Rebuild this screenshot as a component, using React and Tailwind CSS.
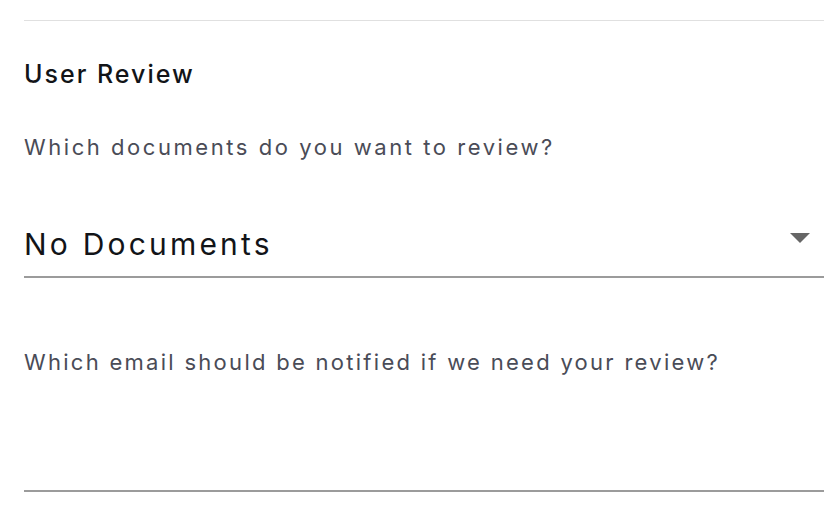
import { useState } from 'react';

export default function App() {
  const [docs] = useState('No Documents');
  const [email, setEmail] = useState('');

  return (
    <div className="w-[840px] h-[508px] bg-white px-6 overflow-hidden" style={{ fontFamily: 'Inter, "Noto Sans", sans-serif' }}>
      <div className="w-[800px]">
        <div className="h-[21px] border-b border-[#e0e0e0]" />

        <h2 className="mt-[38px] text-[25px] leading-[30px] font-medium text-[#121418] tracking-[2px]">User Review</h2>

        <p className="mt-[44px] text-[22px] leading-[28px] text-[#4a4c57] tracking-[2.55px]">
          Which documents do you want to review?
        </p>

        <div className="mt-[65px] flex justify-between border-b-2 border-[#9b9b9b] h-[52px]">
          <span className="text-[30px] leading-[36px] text-[#121418] tracking-[3.2px]">{docs}</span>
          <svg width="20" height="10" viewBox="0 0 20 10" className="mr-[14px] mt-[7px]">
            <path d="M0 0 L20 0 L10 10 Z" fill="#666666" />
          </svg>
        </div>

        <p className="mt-[70px] text-[22px] leading-[28px] text-[#4a4c57] tracking-[2.28px]">
          Which email should be notified if we need your review?
        </p>

        <input
          value={email}
          onChange={e => setEmail(e.target.value)}
          className="block w-full h-[48px] mt-[68px] border-b-2 border-[#9b9b9b] outline-none text-[22px] text-[#121418]"
        />
      </div>
    </div>
  );
}
